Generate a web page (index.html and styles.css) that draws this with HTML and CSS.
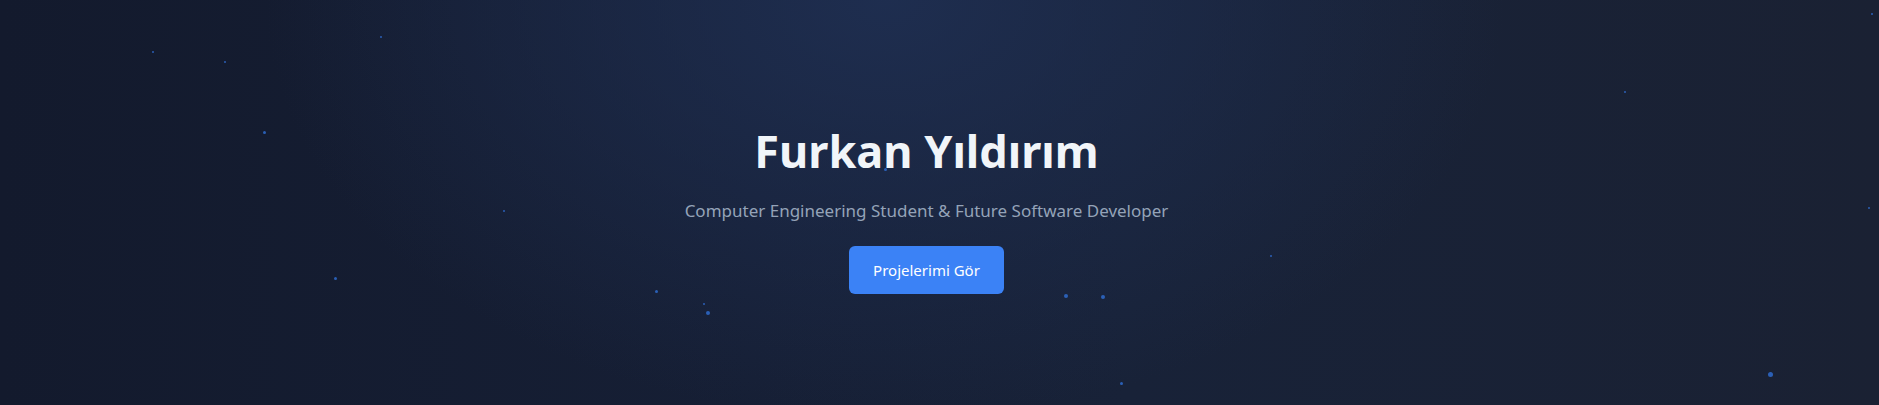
FILE: index.html
```html
<!DOCTYPE html>
<html lang="tr">
<head>
  <meta charset="UTF-8" />
  <meta name="viewport" content="width=device-width, initial-scale=1.0"/>
  <title>Furkan Yıldırım</title>
  <link rel="stylesheet" href="styles.css">
</head>
<body>

<section class="hero">
  <div class="particles">
    <span class="dot" style="left:152px; top:51px; width:2px; height:2px;"></span>
    <span class="dot" style="left:224px; top:61px; width:2px; height:2px;"></span>
    <span class="dot" style="left:380px; top:36px; width:2px; height:2px;"></span>
    <span class="dot" style="left:263px; top:131px; width:3px; height:3px;"></span>
    <span class="dot" style="left:503px; top:210px; width:2px; height:2px;"></span>
    <span class="dot" style="left:334px; top:277px; width:3px; height:3px;"></span>
    <span class="dot" style="left:655px; top:290px; width:3px; height:3px;"></span>
    <span class="dot" style="left:703px; top:303px; width:2px; height:2px;"></span>
    <span class="dot" style="left:706px; top:311px; width:4px; height:4px;"></span>
    <span class="dot" style="left:884px; top:168px; width:3px; height:3px;"></span>
    <span class="dot" style="left:1064px; top:294px; width:4px; height:4px;"></span>
    <span class="dot" style="left:1101px; top:295px; width:4px; height:4px;"></span>
    <span class="dot" style="left:1120px; top:382px; width:3px; height:3px;"></span>
    <span class="dot" style="left:1270px; top:255px; width:2px; height:2px;"></span>
    <span class="dot" style="left:1624px; top:91px; width:2px; height:2px;"></span>
    <span class="dot" style="left:1871px; top:13px; width:2px; height:2px;"></span>
    <span class="dot" style="left:1868px; top:207px; width:2px; height:2px;"></span>
    <span class="dot" style="left:1768px; top:372px; width:5px; height:5px;"></span>
  </div>

  <div class="hero-content">
    <h1>Furkan Yıldırım</h1>
    <p>Computer Engineering Student &amp; Future Software Developer</p>
    <a href="#projects" class="btn">Projelerimi Gör</a>
  </div>
</section>

</body>
</html>
```

FILE: styles.css
```css
body {
  font-family: 'Noto Sans', sans-serif;
  background: #141c2f;
  color: #f1f5f9;
  margin: 0;
  padding: 0;
  overflow: hidden;
}
.hero {
  position: relative;
  height: 405px;
  display: flex;
  align-items: center;
  justify-content: center;
  padding: 17px 26px 0 0;
  box-sizing: border-box;
  background:
    radial-gradient(ellipse 620px 420px at 885px 0, rgba(31, 47, 82, 0.9), rgba(31, 47, 82, 0) 100%),
    linear-gradient(90deg, #131a2d 0%, #161f35 40%, #182238 60%, #1a2133 100%);
  overflow: hidden;
}
.particles {
  position: absolute;
  inset: 0;
  pointer-events: none;
}
.dot {
  position: absolute;
  border-radius: 50%;
  background: #2f6fd6;
  opacity: 0.8;
}
.hero-content {
  position: relative;
  display: flex;
  flex-direction: column;
  align-items: center;
  text-align: center;
}
.hero-content h1 {
  margin: 0 0 24px;
  font-size: 45px;
  line-height: 1;
  font-weight: 700;
  color: #f1f5f9;
}
.hero-content p {
  margin: 0 0 21px;
  font-size: 17px;
  line-height: 28px;
  color: #94a3b8;
}
.btn {
  display: inline-block;
  background-color: #3b82f6;
  color: #fff;
  text-decoration: none;
  font-size: 15px;
  line-height: 24px;
  padding: 12px 24px;
  border-radius: 6px;
}
```
